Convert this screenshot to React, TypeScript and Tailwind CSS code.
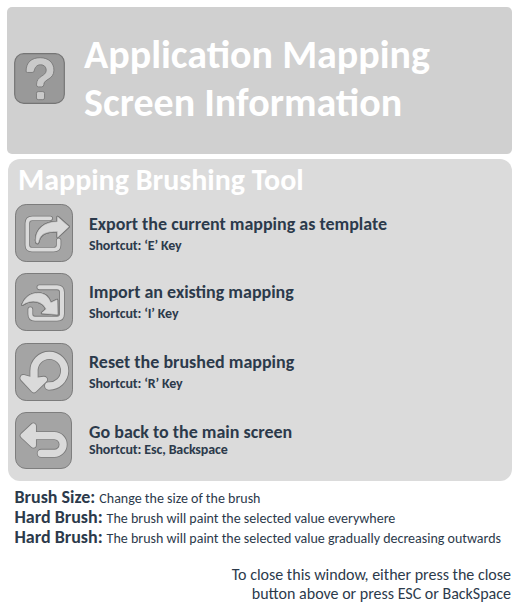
import type { ReactNode } from 'react';

type IconName = 'export' | 'import' | 'reset' | 'back';

// Light glyph with a thin dark contour: the same shapes are painted twice.
function Engraved({ children, fill }: { children: (stroke: string, extra: number) => ReactNode; fill: string }) {
  return (
    <>
      {children('#7a7a7a', 5)}
      {children(fill, 0)}
    </>
  );
}

const EXPORT_ARROW = 'M161 68 128 39V54C85 54 63 78 63 109C64 120 69 120 71 110C76 90 93 81 128 82V99Z';
const IMPORT_ARROW = 'M22 95C32 70 50 60 72 61C92 63 100 72 107 90L126 81 127 124 81 120 94 108C82 83 50 76 22 95Z';

function Glyph({ name }: { name: IconName }) {
  return (
    <Engraved fill="#dadada">
      {(c, e) => {
        const line = { fill: 'none', stroke: c, strokeLinecap: 'round', strokeLinejoin: 'round' } as const;
        const solid = { fill: c, stroke: c, strokeLinejoin: 'round' } as const;
        switch (name) {
          case 'export':
            return (
              <g key={e}>
                <path {...line} strokeWidth={11 + e} d="M106 43H52Q37 43 37 58V123Q37 137 51 137H116Q131 137 131 123V109" />
                <path d={EXPORT_ARROW} fill="#7a7a7a" stroke="#7a7a7a" strokeWidth="7" strokeLinejoin="round" />
                <path {...solid} strokeWidth={2 + e} d={EXPORT_ARROW} />
              </g>
            );
          case 'import':
            return (
              <g key={e}>
                <path {...line} strokeWidth={12 + e} d="M73 43H126Q141 43 141 58V122Q141 137 126 137H60Q46 137 46 123V109" />
                <path d={IMPORT_ARROW} fill="#7a7a7a" stroke="#7a7a7a" strokeWidth="7" strokeLinejoin="round" />
                <path {...solid} strokeWidth={2 + e} d={IMPORT_ARROW} />
              </g>
            );
          case 'reset':
            return (
              <g key={e}>
                <path {...line} strokeWidth={22 + e} d="M101 129A46 46 0 1 0 57 84V122" />
                <path {...solid} strokeWidth={18 + e} d="M25 105 57 139 87 110 57 114Z" />
              </g>
            );
          case 'back':
            return (
              <g key={e}>
                <path {...line} strokeWidth={22 + e} d="M38 72H120A27 27 0 0 1 120 126H80" />
                <path {...solid} strokeWidth={16 + e} d="M25 72 56 43V101Z" />
              </g>
            );
        }
      }}
    </Engraved>
  );
}

function IconTile({ name }: { name: IconName }) {
  return (
    <svg viewBox="0 0 174 174" className={name === 'back' ? 'size-[57px] shrink-0' : 'size-[58px] shrink-0'}>
      <rect x="1.5" y="1.5" width="171" height="171" rx="32" fill="#a4a4a4" stroke="#7c7c7c" strokeWidth="3" />
      <Glyph name={name} />
    </svg>
  );
}

function HelpTile() {
  return (
    <svg viewBox="0 0 152 152" className="size-[51px] shrink-0">
      <rect x="2" y="2" width="148" height="148" rx="27" fill="#999999" stroke="#757575" strokeWidth="3.5" />
      <g fill="#cacaca" stroke="#757575" strokeWidth="2.5">
        <path d="M36 54C36 28 52 14 78 14C103 14 119 29 119 51C119 80 89 77 89 94Q89 101 82 101H73Q67 101 67 95C67 66 96 71 96 51C96 41 89 35 79 35C67 35 62 44 60 54Q59 58 54 58H40Q36 58 36 54Z" />
        <rect x="67" y="115" width="24" height="24" rx="5" />
      </g>
    </svg>
  );
}

function Action({ icon, title, shortcut, className, text, sub }: {
  icon: IconName;
  title: string;
  shortcut: string;
  className: string;
  text: string;
  sub: string;
}) {
  return (
    <li className={`flex items-start gap-4 ${className}`}>
      <IconTile name={icon} />
      <div className={text}>
        <h3 className="text-[18px] leading-[22px] font-bold">{title}</h3>
        <p className={`text-[14px] font-bold tracking-[-0.13px] ${sub}`}>{shortcut}</p>
      </div>
    </li>
  );
}

function Note({ label, children }: { label: string; children: ReactNode }) {
  return (
    <p className="flex h-5 items-baseline gap-1 text-[14px] leading-5">
      <b className="text-[18px] leading-5">{label}</b>
      <span>{children}</span>
    </p>
  );
}

export default function App() {
  return (
    <main className="flex h-[610px] w-[520px] flex-col overflow-hidden bg-white pt-[7px] pr-2 pl-[7px] font-[Carlito,Calibri,sans-serif] whitespace-nowrap text-[#2c3a4b]">
      <header className="flex h-[147px] items-start rounded-[5px] bg-[#d0d0d0] pl-[7px]">
        <div className="pt-[46px]">
          <HelpTile />
        </div>
        <h1 className="pt-6 pl-[19px] text-[40px] leading-[48px] font-bold text-white">
          Application Mapping
          <br />
          Screen Information
        </h1>
      </header>

      <section className="mt-[5px] ml-px h-[322px] rounded-xl bg-[#dbdbdb] pl-[7px]">
        <h2 className="h-[45px] pt-[3px] pl-[3px] text-[30px] leading-9 font-bold text-white">Mapping Brushing Tool</h2>
        <ul>
          <Action icon="export" title="Export the current mapping as template" shortcut="Shortcut: ‘E’ Key" className="h-[69px]" text="pt-[9px]" sub="leading-[22px]" />
          <Action icon="import" title="Import an existing mapping" shortcut="Shortcut: ‘I’ Key" className="h-[70px]" text="pt-2" sub="leading-[22px]" />
          <Action icon="reset" title="Reset the brushed mapping" shortcut="Shortcut: ‘R’ Key" className="h-[69px]" text="pt-2" sub="leading-[22px]" />
          <Action icon="back" title="Go back to the main screen" shortcut="Shortcut: Esc, Backspace" className="h-[57px]" text="pt-[9px] pl-px" sub="leading-[14px]" />
        </ul>
      </section>

      <section className="mt-[6px] pl-[7.5px]">
        <Note label="Brush Size:">Change the size of the brush</Note>
        <Note label="Hard Brush:">The brush will paint the selected value everywhere</Note>
        <Note label="Hard Brush:">The brush will paint the selected value gradually decreasing outwards</Note>
      </section>

      <footer className="mt-[18px] pr-px text-right text-[16px] leading-[19px]">
        To close this window, either press the close
        <br />
        button above or press ESC or BackSpace
      </footer>
    </main>
  );
}
